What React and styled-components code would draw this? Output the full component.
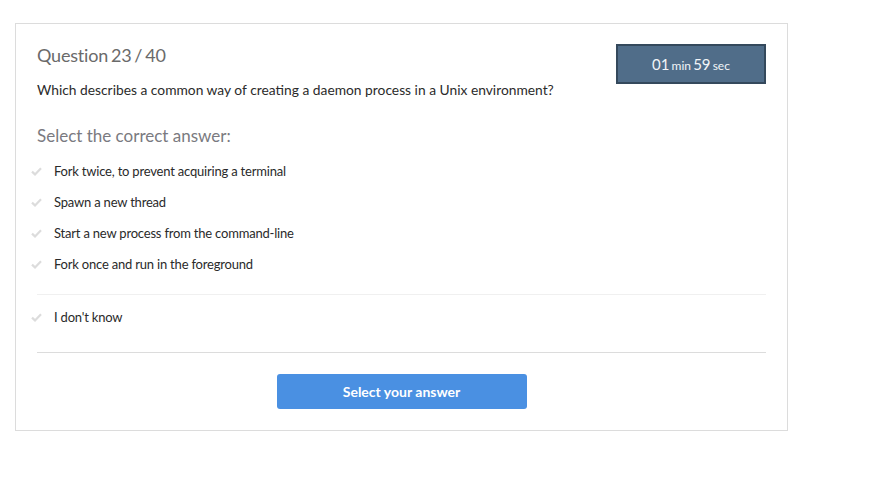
import React from "react";
import styled, { createGlobalStyle } from "styled-components";

const GlobalStyle = createGlobalStyle`
  body {
    margin: 0;
    background: #ffffff;
    font-family: Lato, "Open Sans", sans-serif;
  }
`;

const options = [
  "Fork twice, to prevent acquiring a terminal",
  "Spawn a new thread",
  "Start a new process from the command-line",
  "Fork once and run in the foreground",
];

function Check() {
  return (
    <svg width="11" height="9" viewBox="0 0 11 9">
      <path d="M1 4.6 L4 7.4 L10 1.2" fill="none" stroke="#dcdcdc" strokeWidth="2.2" />
    </svg>
  );
}

function App() {
  return (
    <>
      <GlobalStyle />
      <Card>
        <Header>
          <div>
            <Title>Question 23 / 40</Title>
            <Question>
              Which describes a common way of creating a daemon process in a Unix environment?
            </Question>
          </div>
          <Timer>
            <Big>01</Big> <Small>min</Small> <Big>59</Big> <Small>sec</Small>
          </Timer>
        </Header>
        <Subtitle>Select the correct answer:</Subtitle>
        <List $top={16}>
          {options.map((o) => (
            <Option key={o}>
              <Check />
              <span>{o}</span>
            </Option>
          ))}
        </List>
        <Divider $light />
        <List $top={13}>
          <Option>
            <Check />
            <span>I don't know</span>
          </Option>
        </List>
        <Divider />
        <Footer>
          <Button>Select your answer</Button>
        </Footer>
      </Card>
    </>
  );
}

export default App;

const Card = styled.div`
  margin: 23px 0 0 15px;
  width: 773px;
  height: 408px;
  box-sizing: border-box;
  border: 1px solid #dcdcdc;
  padding: 20px 21px 0 21px;
`;

const Header = styled.div`
  display: flex;
  justify-content: space-between;
  align-items: flex-start;
`;

const Title = styled.div`
  font-size: 18px;
  color: #6a6a6a;
  line-height: 22px;
  letter-spacing: -0.2px;
  word-spacing: -1.5px;
`;

const Question = styled.div`
  margin-top: 16px;
  font-size: 13.8px;
  color: #2b2b2b;
  line-height: 16px;
`;

const Timer = styled.div`
  width: 150px;
  height: 40px;
  box-sizing: border-box;
  background: #506d89;
  border: 2px solid #34495c;
  color: #f2f5f8;
  text-align: center;
  line-height: 35px;
  white-space: pre;
  word-spacing: -2px;
`;

const Big = styled.span`
  font-size: 15px;
`;

const Small = styled.span`
  font-size: 12px;
`;

const Subtitle = styled.div`
  margin-top: 28px;
  font-size: 17px;
  color: #7a7a80;
  line-height: 20px;
`;

const List = styled.div`
  display: flex;
  flex-direction: column;
  margin-top: ${(p) => p.$top}px;
  gap: 13px;
`;

const Option = styled.div`
  display: flex;
  align-items: center;
  gap: 12px;
  margin-left: -6px;
  height: 18px;
  font-size: 13px;
  color: #2a2a2a;
  letter-spacing: -0.2px;
`;

const Divider = styled.div`
  height: 1px;
  background: ${(p) => (p.$light ? "#f0f0f0" : "#dcdcdc")};
  margin-top: ${(p) => (p.$light ? "21px" : "26px")};
`;

const Footer = styled.div`
  display: flex;
  justify-content: center;
  margin-top: 21px;
`;

const Button = styled.button`
  width: 250px;
  height: 35px;
  border: none;
  border-radius: 3px;
  background: #4a90e2;
  color: #ffffff;
  font-family: Lato, sans-serif;
  font-weight: 700;
  font-size: 14px;
`;
